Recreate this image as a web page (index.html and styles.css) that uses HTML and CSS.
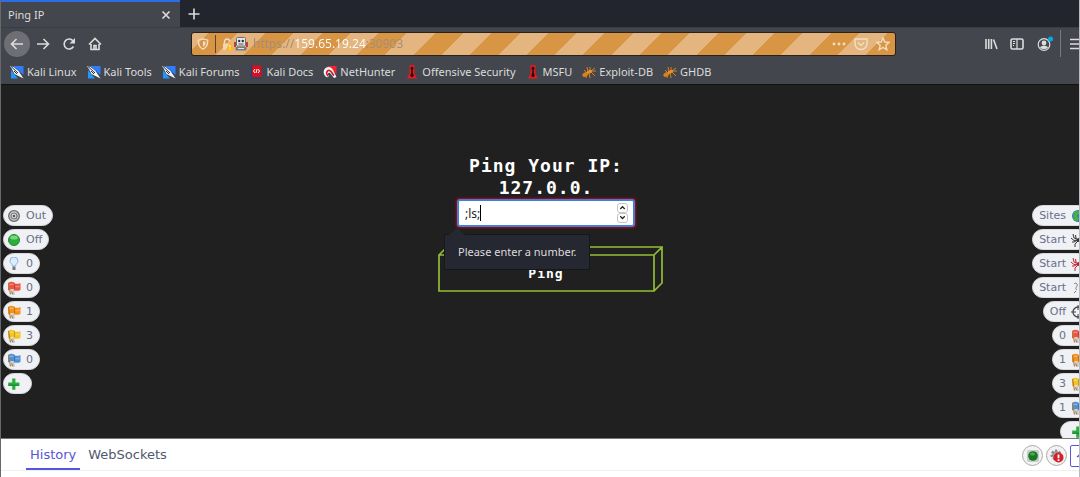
FILE: index.html
```html
<!DOCTYPE html>
<html lang="en">
<head>
<meta charset="utf-8">
<title>Ping IP</title>
<link rel="stylesheet" href="styles.css">
</head>
<body>
<svg class="sprite" aria-hidden="true">
  <symbol id="kali" viewBox="0 0 14 14">
    <path d="M3 1h10.500v9L9 6z" fill="#2f7dff"/>
    <path d="M1 5l4 5 3 3.500H1z" fill="#2295ff"/>
    <path d="M0 1l3.500 1 5 4 2 3 3 4.500-5-2.500-4-2-2-4z" fill="#f4f6f8"/>
    <path d="M1 1.500l7 6.500M4 6l3 3" stroke="#26303c" stroke-width="1"/>
  </symbol>
  <symbol id="therm" viewBox="0 0 14 14">
    <path d="M4.500 0h5v8.500l2.500 5H2l2.500-5z" fill="#df1d22"/>
    <path d="M7 1.500v8M5.500 3.500h3" stroke="#300" stroke-width="1.400"/>
    <path d="M7 7.500l1.800 2.500-.8 2H6l-.8-2z" fill="#300"/>
  </symbol>
  <symbol id="bug" viewBox="0 0 14 14">
    <g fill="none" stroke="#d9811f" stroke-width="1"><path d="M5 8L2 5M6 7L5 2M8 6l0-4M9 6l4-3M7 8l1 5M9 7l4 4M5 9l-1 4M9 6h5"/></g>
    <ellipse cx="3.200" cy="9.500" rx="3" ry="2" transform="rotate(-30 3.200 9.500)" fill="#d9811f"/>
    <ellipse cx="7.500" cy="6.800" rx="2.800" ry="1.600" transform="rotate(-25 7.500 6.800)" fill="#e88f25"/>
  </symbol>
  <symbol id="flag" viewBox="0 0 14 14">
    <path d="M1 2C3 .5 5 .5 7.500 1.500V2.500c2 .5 4 .5 6-.5v7c-2 1-4.500 1-6.500.5V8.500C4.500 8 3 8.500 1 9.500z" fill="currentColor"/>
    <path d="M2 4c1.500-1 3-1 4.500-.3M8.500 5.500c1.500.3 2.500.3 4-.3" fill="none" stroke="#fff" stroke-opacity=".35" stroke-width="1.300"/>
    <path d="M7.500 2v6.500" stroke="#000" stroke-opacity=".2"/>
    <path d="M1.500 2l2 11.500" stroke="#b57a3c" stroke-width="1.200"/>
    <path d="M4 9.500l3-1 1 5H4.500z" fill="#c9c4ba"/>
    <path d="M4.500 10.500l1.500 3" stroke="#8b7c68"/>
  </symbol>
  <symbol id="plus" viewBox="0 0 14 14">
    <path d="M5.200 1.500h3.200v4h4v3.200h-4v4H5.200v-4h-4V5.500h4z" fill="#25b13a"/>
    <path d="M1.200 8.200h11" stroke="#148026" stroke-width="1"/>
  </symbol>
  <symbol id="spider" viewBox="0 0 14 14">
    <ellipse cx="8" cy="7" rx="2.400" ry="2" fill="currentColor"/>
    <path d="M6 6L3 5 2 1M6 7L3 7.500 0 5M6 7.500L3 9l-2 0M7 8l-3 3v3M5 5L4.500 2M9 6l2-2 1-3M9 7h3l2-3M9 7l3 2 1 3M8 8l2 3v3" fill="none" stroke="currentColor" stroke-width="1"/>
  </symbol>
</svg>

<div class="window">
  <header class="chrome">
    <div class="tabs">
      <div class="tab"><span>Ping IP</span>
        <button class="plain" aria-label="Close tab"><svg class="i10" viewBox="0 0 10 10"><path d="M1.500 1.500l7 7M8.500 1.500l-7 7" class="line"/></svg></button>
      </div>
      <button class="plain newtab" aria-label="New tab"><svg class="i12" viewBox="0 0 12 12"><path d="M6 .5v11M.5 6h11" class="line"/></svg></button>
    </div>

    <div class="toolbar">
      <nav class="nav">
        <button class="plain back" aria-label="Back"><svg class="i14" viewBox="0 0 14 14"><path d="M13 7H1.500M6.500 2l-5 5 5 5" class="line"/></svg></button>
        <button class="plain" aria-label="Forward"><svg class="i14" viewBox="0 0 14 14"><path d="M1 7h11.500M7.500 2l5 5-5 5" class="line"/></svg></button>
        <button class="plain" aria-label="Reload"><svg class="i14" viewBox="0 0 14 14"><path d="M11.500 9.500A5 5 0 1 1 11 3.800" class="line"/><path d="M13 1v5.500H7.500z" fill="#dcdcdc"/></svg></button>
        <button class="plain" aria-label="Home"><svg class="i14" viewBox="0 0 14 14"><path d="M1 7.500L7 1.500l6 6M3 7v5.500h8V7" class="line"/><path d="M6 12V8.500h2V12" class="line"/></svg></button>
      </nav>
      <div class="url">
        <svg class="i12" viewBox="0 0 12 12"><path d="M6 .8l4.700 1.400c0 4.500-1.200 7.500-4.700 9-3.500-1.500-4.700-4.500-4.700-9z" class="urlline"/><path d="M6 3v6c2-1 2.500-3 2.500-5z" fill="#f4dfc5"/></svg>
        <span class="rule"></span>
        <span class="siteid">
          <svg class="i12" viewBox="0 0 12 12"><path d="M2.500 6V3.500a2.500 2.500 0 0 1 5 0" class="urlline"/><path d="M1 5.500h7V12H1z" fill="#f0d4b3"/><path d="M7.800 4.500L12 12H3.800z" fill="#ffb80d"/><path d="M7.900 7v2.500M7.900 10.300v1" stroke="#fff"/></svg>
          <svg class="i14" viewBox="0 0 14 14"><path d="M0 5h2v5H0zM12 5h2v5h-2z" fill="#bd4037"/><rect x="2.500" y=".5" width="9" height="8.500" rx="1" fill="#e6e7e9" stroke="#6b7078"/><circle cx="5.200" cy="4" r="1.200" fill="#333"/><circle cx="8.800" cy="4" r="1.200" fill="#333"/><path d="M4.500 7h5" stroke="#555"/><path d="M1.500 10h11v3.500h-11z" fill="#777b83"/><path d="M4 11.500h6" stroke="#e3e3e3"/></svg>
        </span>
        <input class="address" aria-label="Address" value="https://159.65.19.24:30903">
        <svg class="i14" viewBox="0 0 14 14"><circle cx="2" cy="7" r="1.400" fill="#f4dfc5"/><circle cx="7" cy="7" r="1.400" fill="#f4dfc5"/><circle cx="12" cy="7" r="1.400" fill="#f4dfc5"/></svg>
        <svg class="i14" viewBox="0 0 14 14"><path d="M1 2h12v4.500a6 6 0 0 1-12 0z" class="urlline"/><path d="M4 5.500l3 3 3-3" class="urlline"/></svg>
        <svg class="i14" viewBox="0 0 14 14"><path d="M7 1l1.800 4 4.200.4-3.200 2.900 1 4.400L7 10.500l-3.800 2.200 1-4.400L1 5.400 5.200 5z" class="urlline"/></svg>
      </div>
      <div class="tools">
        <button class="plain" aria-label="Library"><svg class="i14" viewBox="0 0 14 14"><path d="M2 2v10M4.700 2v10M7.400 2v10M9.500 2.500l3.500 9.500" class="line"/></svg></button>
        <button class="plain" aria-label="Sidebars"><svg class="i14" viewBox="0 0 14 14"><rect x="1" y="2" width="12" height="10" rx="1.500" class="line"/><path d="M7 2v10M3 4.500h2M3 6.500h2M3 8.500h1" class="line thin"/></svg></button>
        <button class="plain" aria-label="Account"><svg class="i18" viewBox="0 0 18 18"><circle cx="8" cy="9.500" r="5.800" class="line thin"/><circle cx="8" cy="8" r="2.400" fill="#dcdcdc"/><path d="M4 12.500c1-2.500 7-2.500 8 0-2 2-6 2-8 0z" fill="#dcdcdc"/><circle cx="14.500" cy="4" r="2.500" fill="#00a9f5"/></svg></button>
      </div>
      <button class="plain menu" aria-label="Menu"><svg class="i14" viewBox="0 0 14 14"><path d="M1 2.500h12M1 7h12M1 11.500h12" class="line"/></svg></button>
    </div>

    <nav class="bookmarks">
      <a href="#"><svg class="i14"><use href="#kali"/></svg>Kali Linux</a>
      <a href="#"><svg class="i14"><use href="#kali"/></svg>Kali Tools</a>
      <a href="#"><svg class="i14"><use href="#kali"/></svg>Kali Forums</a>
      <a href="#"><svg class="i14" viewBox="0 0 14 14"><path d="M2 .5h9.500V12H2z" fill="#d70f20"/><path d="M1.500 .5v12.500M1 13h10.500" stroke="#263f78" stroke-width="1.200"/><path d="M5 4L3.500 6 5 8M8 4l1.500 2L8 8M7 4L6 8" fill="none" stroke="#fff"/></svg>Kali Docs</a>
      <a href="#"><svg class="i14" viewBox="0 0 14 14"><path d="M4 1h9.500v8z" fill="#ef2632"/><path d="M1 5C3 1 8 1 10 5l3.500 7-2.500 1-4-5C5 7 4 9 6 11l-2 1.500C1 11 0 8 1 5z" fill="#f5f5f5"/><path d="M5 11C2.500 9 3.500 5 6.500 5.500 9 6 9 9 11 10.500" fill="none" stroke="#c81a28" stroke-width="1.700"/></svg>NetHunter</a>
      <a href="#"><svg class="i14"><use href="#therm"/></svg>Offensive Security</a>
      <a href="#"><svg class="i14"><use href="#therm"/></svg>MSFU</a>
      <a href="#"><svg class="i14"><use href="#bug"/></svg>Exploit-DB</a>
      <a href="#"><svg class="i14"><use href="#bug"/></svg>GHDB</a>
    </nav>
  </header>

  <main class="page">
    <aside class="rail">
      <button class="pill"><svg class="i14" viewBox="0 0 14 14"><circle cx="7" cy="7" r="5.300" fill="#d8d8d8" stroke="#666" stroke-width="1.300"/><circle cx="7" cy="7" r="3" fill="none" stroke="#777" stroke-width="1.200"/><circle cx="7" cy="7" r="1.200" fill="#555"/></svg>Out</button>
      <button class="pill"><svg class="i14" viewBox="0 0 14 14"><circle cx="7" cy="7" r="5.500" fill="#2cae3a" stroke="#228c30"/><ellipse cx="7" cy="4.500" rx="3.800" ry="2" fill="#75d87b"/></svg>Off</button>
      <button class="pill"><svg class="i14" viewBox="0 0 14 14"><path d="M5.500 9C5.500 7 3 6.500 3 4a4 4 0 0 1 8 0c0 2.500-2.500 3-2.500 5z" fill="#d9edff" stroke="#8ab6e3"/><path d="M5.500 9.500h3v3.500h-3z" fill="#777"/></svg>0</button>
      <button class="pill"><svg class="i14 red"><use href="#flag"/></svg>0</button>
      <button class="pill"><svg class="i14 orange"><use href="#flag"/></svg>1</button>
      <button class="pill"><svg class="i14 yellow"><use href="#flag"/></svg>3</button>
      <button class="pill"><svg class="i14 blue"><use href="#flag"/></svg>0</button>
      <button class="pill add" aria-label="Add tool"><svg class="i14"><use href="#plus"/></svg></button>
    </aside>

    <form class="ping" novalidate>
      <label class="title" for="ip">Ping Your IP:<br>127.0.0.</label>
      <div class="field">
        <input id="ip" type="text" value=";ls;" aria-describedby="hint">
        <span class="caret"></span>
        <span class="spin">
          <button type="button" aria-label="Increase"><svg viewBox="0 0 10 8"><path d="M2.500 5.500L5 3l2.500 2.500"/></svg></button>
          <button type="button" aria-label="Decrease"><svg viewBox="0 0 10 8"><path d="M2.500 2.500L5 5l2.500-2.500"/></svg></button>
        </span>
        <div class="tip" id="hint" role="alert">Please enter a number.</div>
      </div>
      <button class="send" type="button">
        <svg class="box" viewBox="0 0 225 46" aria-hidden="true"><path d="M1 9h215v36H1zM1 9l8-8h215l-8 8M224 1v36l-8 8"/></svg>
        Ping
      </button>
    </form>

    <aside class="rail right">
      <button class="pill">Sites<svg class="i14" viewBox="0 0 14 14"><circle cx="7" cy="7" r="6" fill="#446bc8"/><path d="M3 2.500l5-1 1 3-3 2 2 3-2 3.500-3-2-1-4z" fill="#42b349"/></svg></button>
      <button class="pill">Start<svg class="i14 black"><use href="#spider"/></svg></button>
      <button class="pill">Start<svg class="i14 crimson"><use href="#spider"/></svg></button>
      <button class="pill">Start<svg class="i14" viewBox="0 0 14 14"><path d="M3 3c2-2 4 0 3 2s-2 3 0 4M3 12l2-2M8 5l3-3" fill="none" stroke="#777"/></svg></button>
      <button class="pill">Off<svg class="i14" viewBox="0 0 14 14"><circle cx="7" cy="7" r="5" fill="none" stroke="#444" stroke-width="1.300"/><path d="M0 7h5M9 7h5M7 0v5M7 9v5" stroke="#444"/></svg></button>
      <button class="pill">0<svg class="i14 red"><use href="#flag"/></svg></button>
      <button class="pill">1<svg class="i14 orange"><use href="#flag"/></svg></button>
      <button class="pill">3<svg class="i14 yellow"><use href="#flag"/></svg></button>
      <button class="pill">1<svg class="i14 blue"><use href="#flag"/></svg></button>
      <button class="pill add" aria-label="Add tool"><svg class="i14"><use href="#plus"/></svg></button>
    </aside>
  </main>

  <footer class="panel">
    <nav class="paneltabs">
      <a class="on" href="#">History</a>
      <a href="#">WebSockets</a>
    </nav>
    <div class="actions">
      <button class="round" aria-label="Status"><svg class="i14" viewBox="0 0 14 14"><rect x="1" y="1" width="12" height="12" rx="2" fill="#c9cbc9"/><circle cx="7" cy="7" r="4.800" fill="#187a20"/><ellipse cx="6.500" cy="5" rx="2.500" ry="1.500" fill="#4fa955"/></svg></button>
      <button class="round" aria-label="Errors"><svg class="i14" viewBox="0 0 14 14"><circle cx="6" cy="6" r="4" fill="#aaa" stroke="#888" stroke-width="3" stroke-dasharray="2 1.500"/><circle cx="8.500" cy="8.500" r="5" fill="#d5202a"/><path d="M8.500 5.500v3.800M8.500 10.300v1.700" stroke="#fff" stroke-width="1.800"/></svg></button>
      <button class="more" aria-label="Expand panel"><svg class="i12" viewBox="0 0 12 12"><path d="M2 7l4-3 4 3" fill="none" stroke="#5755d9" stroke-width="1.500"/></svg></button>
    </div>
  </footer>
</div>
</body>
</html>
```
FILE: styles.css
```css
* { box-sizing: border-box; }
html { height: 100%; overflow: hidden; }
body { margin: 0; height: 100%; overflow: hidden; border-left: 1px solid #67686b; border-right: 1px solid #b9bbc0; font-family: "Noto Sans", sans-serif; font-size: 11px; color: #dcdcdc; background: #202020; }
button { font: inherit; color: inherit; margin: 0; }
.sprite { position: absolute; width: 0; height: 0; }
.i10 { width: 10px; height: 10px; }
.i12 { width: 12px; height: 14px; }
.i14 { width: 14px; height: 14px; }
.i18 { width: 18px; height: 18px; }
svg { display: block; flex: none; }
.line { fill: none; stroke: #dcdcdc; stroke-width: 1.600; }
.thin { stroke-width: 1.200; }
.urlline { fill: none; stroke: #f4dfc5; stroke-width: 1.400; }
.plain { display: flex; align-items: center; justify-content: center; padding: 0; border: 0; background: none; }

/* The window runs past the right edge of the visible area. */
.window { display: flex; flex-direction: column; height: 100%; margin-right: -12px; }

.chrome { background: #43464d; border-bottom: 1px solid #111; }
.tabs { display: flex; height: 27px; background: #23252e; }
.tab { display: flex; align-items: center; justify-content: space-between; width: 179px; padding: 0 9px 0 7px; border-top: 2px solid #2a6fe8; background: #43464d; }
.newtab { width: 28px; }
.toolbar { display: flex; align-items: center; height: 32px; border-top: 1px solid #3a3c43; }
.nav { display: flex; align-items: center; gap: 12px; padding-left: 3px; }
.back { width: 26px; height: 26px; margin-right: -6px; border-radius: 50%; background: #6d6f74; }
.url { display: flex; flex: 1; align-items: center; gap: 8px; height: 24px; margin: 0 88px 0 89px; padding: 0 5px; border: 1px solid #2b211b; border-radius: 3px; background: repeating-linear-gradient(135deg, #e4b57f 0, #e4b57f 12px, #d89544 12px, #d89544 32px, #e4b57f 32px, #e4b57f 40px); }
.rule { width: 1px; height: 18px; margin: 0 -2px; background: #574637; }
.siteid { display: flex; margin-right: -3px; }
.address { flex: 1; min-width: 0; padding: 0; border: 0; outline: 0; font: 12px "Noto Sans", sans-serif; color: transparent; background: linear-gradient(90deg, #a18d78 41px, #fff 41px, #fff 113px, #a18d78 113px); background-clip: text; -webkit-background-clip: text; }
.tools { display: flex; align-items: center; gap: 12px; padding-right: 6px; }
.menu { align-self: stretch; width: 31px; margin: 2px 0; border-left: 1px solid #777980; }
.bookmarks { display: flex; align-items: center; gap: 10px; height: 25px; padding-left: 9px; white-space: nowrap; }
.bookmarks a { display: flex; align-items: center; gap: 3px; color: #dcdcdc; text-decoration: none; }

.page { display: grid; flex: 1; grid-template-columns: 1fr auto 1fr; min-height: 0; overflow: hidden; background: #202020; }
.rail { display: flex; flex-direction: column; align-items: flex-start; gap: 3px; padding: 120px 2px 0; }
.rail.right { align-items: flex-end; }
.pill { display: flex; align-items: center; gap: 5px; height: 21px; padding: 0 6px 0 3px; flex: none; border: 1px solid #d9dade; border-radius: 11px; background: #f0f1f4; color: #66708a; font: 11px "DejaVu Sans", sans-serif; }
.right .pill { padding: 0 3px 0 6px; }
.pill.add { padding-right: 10px; }
.right .pill.add { padding-left: 10px; padding-right: 3px; }
.red { color: #f05243; }
.orange { color: #f59217; }
.yellow { color: #f2c51f; }
.blue { color: #4e91d6; }
.black { color: #333; }
.crimson { color: #c41f2b; }

.ping { display: flex; flex-direction: column; align-items: center; padding-top: 70px; }
.title { font: bold 18px/22px "DejaVu Sans Mono", monospace; letter-spacing: 1px; text-align: center; color: #fff; }
.field { position: relative; display: flex; width: 178px; }
.field input { width: 100%; height: 28px; padding: 0 24px 0 6px; border: 2px solid #3584e4; border-radius: 3px; outline: 0; box-shadow: 0 0 2px 1px #c90000; background: #fff; color: #222; font: 12px "Noto Sans", sans-serif; }
.caret { position: absolute; left: 23px; top: 6px; width: 1px; height: 16px; background: #000; }
.spin { position: absolute; right: 7px; top: 4px; display: flex; flex-direction: column; }
.spin button { width: 11px; height: 10px; padding: 0; border: 1px solid #c8c4c0; border-radius: 3px; background: #fff; }
.spin path { fill: none; stroke: #222; stroke-width: 1.400; }
.tip { position: absolute; z-index: 2; left: -13px; top: 35px; padding: 0 13px; border: 1px solid #17181c; background: #252731; color: #dcdcdc; line-height: 34px; white-space: nowrap; }
.tip::before { content: ""; position: absolute; left: 4px; top: -7px; border: 8px solid transparent; border-top: 0; border-bottom: 7px solid #252731; }
.send { position: relative; width: 217px; height: 38px; margin: 27px 0 0; padding: 0; border: 0; background: none; color: #fff; font: bold 13px "DejaVu Sans Mono", monospace; letter-spacing: 1px; }
.box { position: absolute; left: 0; bottom: 0; width: 225px; height: 46px; }
.box path { fill: none; stroke: #93bd35; stroke-width: 1.700; }

.panel { display: flex; justify-content: space-between; height: 39px; border-top: 1px solid #777; background: linear-gradient(#fff 31px, #eeeff2 31px, #eeeff2 32px, #fff 32px); color: #50596c; font: 13px "DejaVu Sans", sans-serif; }
.paneltabs, .actions { height: 33px; }
.paneltabs { display: flex; gap: 4px; padding-left: 25px; }
.paneltabs a { height: 31px; padding: 0 4px; border-bottom: 2px solid transparent; color: #50596c; line-height: 31px; text-decoration: none; }
.paneltabs .on { border-color: #5755d9; color: #5755d9; }
.actions { display: flex; align-items: center; gap: 3px; }
.round { display: flex; align-items: center; justify-content: center; width: 21px; height: 21px; padding: 0; border: 1px solid #aaa; border-radius: 50%; background: #f3f3f3; }
.more { display: flex; align-items: center; width: 21px; height: 22px; padding: 0 4px; border: 1px solid #5755d9; border-radius: 2px; background: #fff; }
```
